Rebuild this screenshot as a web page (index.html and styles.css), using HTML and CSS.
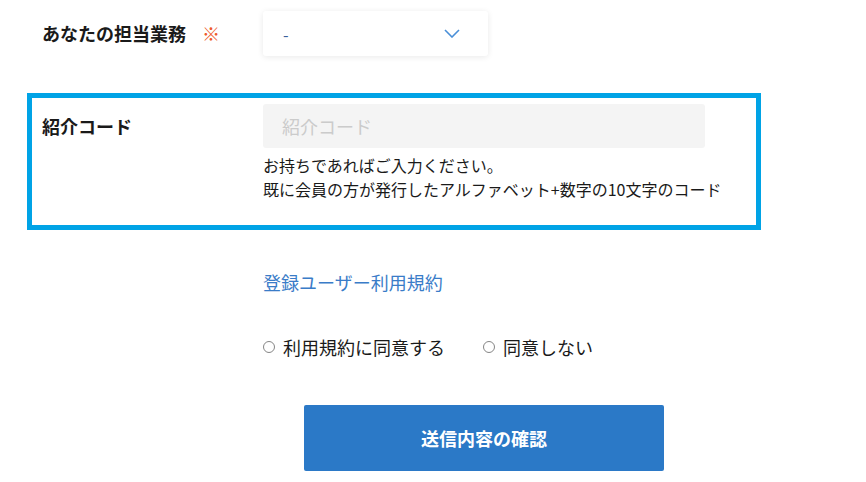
FILE: index.html
```html
<!DOCTYPE html>
<html lang="ja">
<head>
  <meta charset="UTF-8" />
  <meta name="viewport" content="width=device-width, initial-scale=1.0" />
  <title>会員登録</title>
  <link rel="stylesheet" href="styles.css">
</head>
<body>
  <form class="entry-form">
    <div class="row">
      <div class="label">あなたの担当業務<span class="required">※</span></div>
      <div class="field">
        <div class="select">
          <span class="select-value">-</span>
          <svg class="chevron" width="16" height="9" viewBox="0 0 16 9">
            <path d="M1 1 L8 8 L15 1" fill="none" stroke="#4a8fd8" stroke-width="1.6" />
          </svg>
        </div>
      </div>
    </div>

    <div class="row highlight">
      <div class="label">紹介コード</div>
      <div class="field">
        <input type="text" class="text-input" placeholder="紹介コード" />
        <p class="help">お持ちであればご入力ください。<br>既に会員の方が発行したアルファベット+数字の10文字のコード</p>
      </div>
    </div>

    <div class="actions">
      <a href="#" class="terms-link">登録ユーザー利用規約</a>
      <div class="radios">
        <label class="radio"><input type="radio" name="agree" value="yes" />利用規約に同意する</label>
        <label class="radio"><input type="radio" name="agree" value="no" />同意しない</label>
      </div>
      <div class="submit-wrap">
        <button type="button" class="submit">送信内容の確認</button>
      </div>
    </div>
  </form>
</body>
</html>
```

FILE: styles.css
```css
body {
  margin: 0;
  background: #fff;
  color: #1a1a1a;
  font-family: "Noto Sans CJK JP", "Noto Sans", sans-serif;
}
.entry-form {
  margin-left: 27px;
  width: 734px;
}
.row {
  display: grid;
  grid-template-columns: 221px 442px;
  border: 5px solid transparent;
  padding: 6px 10px;
}
.row.highlight {
  border-color: #00a3e6;
  margin-top: 26px;
  padding-bottom: 24px;
}
.label {
  font-size: 18px;
  font-weight: 700;
  line-height: 44px;
  white-space: nowrap;
}
.required {
  color: #ee5a2a;
  font-weight: 400;
  font-size: 18px;
  margin-left: 16px;
}
.select {
  width: 225px;
  height: 45px;
  box-sizing: border-box;
  display: flex;
  align-items: center;
  justify-content: space-between;
  padding: 0 28px 0 20px;
  background: #fff;
  border-radius: 3px;
  box-shadow: 0 1px 6px rgba(0, 0, 0, 0.09);
  font-size: 16px;
  color: #3a5f9a;
}
.chevron {
  display: block;
}
.text-input {
  display: block;
  width: 100%;
  height: 44px;
  box-sizing: border-box;
  border: none;
  border-radius: 3px;
  background: #f4f4f4;
  padding: 0 19px;
  font-family: inherit;
  font-size: 18px;
  outline: none;
}
.text-input::placeholder {
  color: #cbcbcb;
}
.help {
  margin: 5px 0 0;
  font-size: 16px;
  line-height: 24px;
  white-space: nowrap;
}
.actions {
  margin-left: 236px;
  width: 442px;
}
.terms-link {
  display: block;
  margin-top: 37px;
  font-size: 18px;
  line-height: 30px;
  color: #3a7cc8;
  text-decoration: none;
}
.radios {
  display: flex;
  margin-top: 35px;
  font-size: 18px;
  line-height: 30px;
}
.radio {
  display: flex;
  align-items: center;
}
.radio + .radio {
  margin-left: 38px;
}
.radio input {
  appearance: none;
  width: 12px;
  height: 12px;
  margin: 0 8px 0 0;
  border: 1px solid #858585;
  border-radius: 50%;
  background: #fff;
}
.submit-wrap {
  display: flex;
  justify-content: center;
  margin-top: 43px;
}
.submit {
  width: 360px;
  height: 66px;
  border: none;
  border-radius: 2px;
  background: #2b79c7;
  color: #fff;
  font-family: inherit;
  font-size: 18px;
  font-weight: 700;
  cursor: pointer;
}
```
